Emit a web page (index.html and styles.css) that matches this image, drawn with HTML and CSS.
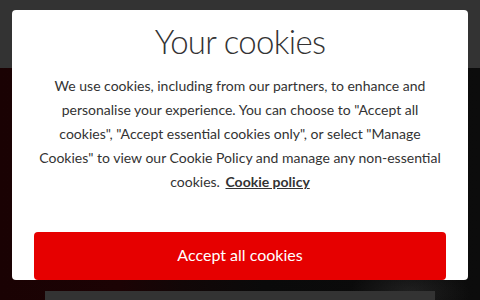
FILE: index.html
```html
<!DOCTYPE html>
<html lang="en">
<head>
<meta charset="utf-8">
<title>Your cookies</title>
<link rel="stylesheet" href="styles.css">
</head>
<body>
<div class="page">
  <header class="topbar"></header>
  <section class="hero">
    <div class="hero-card"></div>
  </section>
</div>
<div class="modal" role="dialog" aria-labelledby="cookie-title">
  <h1 id="cookie-title" class="modal-title">Your cookies</h1>
  <p class="modal-text">We use cookies, including from our partners, to enhance and personalise your experience. You can choose to "Accept all cookies", "Accept essential cookies only", or select "Manage Cookies" to view our Cookie Policy and manage any non-essential cookies. <a class="policy-link" href="#">Cookie policy</a></p>
  <button class="accept-btn" type="button">Accept all cookies</button>
</div>
</body>
</html>
```
FILE: styles.css
```css
html, body {
  margin: 0;
  padding: 0;
  width: 480px;
  height: 300px;
  overflow: hidden;
}
body {
  font-family: "Lato", "Open Sans", sans-serif;
  background: #0b0b0b;
}
.page {
  display: flex;
  flex-direction: column;
  height: 300px;
}
.topbar {
  height: 68px;
  background: #333333;
  flex: none;
}
.hero {
  flex: 1;
  background:
    radial-gradient(ellipse 60px 30px at 410px 225px, rgba(70, 70, 70, 0.35), rgba(0, 0, 0, 0) 100%),
    linear-gradient(90deg, #1a0203 0%, #1c0304 25%, #120707 38%, #0a0a0a 55%, #0c0c0c 100%);
  display: flex;
  flex-direction: column;
  justify-content: flex-end;
  padding: 0 45px;
}
.hero-card {
  height: 9px;
  background: #333333;
}
.modal {
  position: absolute;
  left: 12px;
  top: 10px;
  width: 456px;
  height: 270px;
  background: #ffffff;
  border-radius: 4px;
  overflow: hidden;
  display: flex;
  flex-direction: column;
  align-items: center;
  box-sizing: border-box;
  padding: 0 22px;
}
.modal-title {
  margin: 11px 0 0;
  font-family: "Lato", sans-serif;
  font-weight: 300;
  font-size: 33px;
  line-height: 40px;
  color: #333333;
  letter-spacing: -0.7px;
}
.modal-text {
  margin: 13px 0 0;
  font-family: "Lato", sans-serif;
  font-size: 14px;
  line-height: 24px;
  color: #333333;
  text-align: center;
}
.policy-link {
  margin-left: 2px;
  color: #333333;
  font-weight: 700;
  text-decoration: underline;
}
.accept-btn {
  margin-top: auto;
  width: 100%;
  height: 48px;
  padding: 0 0 3px;
  border: none;
  border-radius: 4px;
  background: #e60000;
  color: #ffffff;
  font-family: "Lato", sans-serif;
  font-size: 16px;
  flex: none;
}
```
